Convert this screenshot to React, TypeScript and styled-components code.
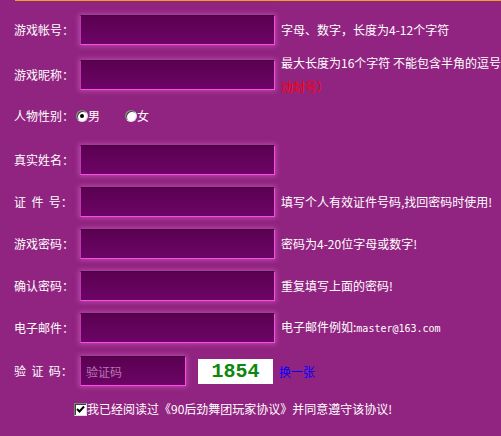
import React from "react";
import styled, { createGlobalStyle } from "styled-components";

const Global = createGlobalStyle`
  html, body { margin: 0; padding: 0; background: #922481; overflow: hidden; }
  body { font-family: "Noto Sans CJK SC", "Liberation Sans", sans-serif; font-size: 12px; color: #fff; }
`;

const Page = styled.div`
  width: 501px;
  height: 436px;
  background: #922481;
  position: relative;
  overflow: hidden;
  display: flex;
  flex-direction: column;
`;

const TopLine = styled.div`
  height: 1px;
  margin-left: 15px;
  background: #f0a020;
  flex: none;
`;

const Row = styled.div<{ $mt: number; $h: number }>`
  display: flex;
  align-items: center;
  margin-top: ${(p) => p.$mt}px;
  height: ${(p) => p.$h}px;
  flex: none;
`;

const Label = styled.div`
  width: 66px;
  padding-left: 14px;
  white-space: pre;
  line-height: 14px;
  flex: none;
`;

const Field = styled.div<{ $w: number }>`
  width: ${(p) => p.$w}px;
  height: 30px;
  box-sizing: border-box;
  flex: none;
  background: linear-gradient(#5a0150, #6d0467);
  border-top: 1px solid #4a0040;
  border-left: 1px solid #c036b0;
  border-right: 1px solid #ff4ae6;
  border-bottom: 1px solid #ff4ae6;
  box-shadow: 0 0 5px 1px rgba(215, 110, 205, 0.55);
  display: flex;
  align-items: center;
  padding-left: 5px;
`;

const Placeholder = styled.span`
  color: #b878ae;
  font-size: 12px;
`;

const Hint = styled.div`
  margin-left: 6px;
  white-space: nowrap;
  line-height: 24px;
`;

const Red = styled.div`
  color: #ff0000;
`;

const Mono = styled.span`
  font-family: "DejaVu Sans Mono", "Liberation Mono", monospace;
  font-size: 10px;
`;

const RadioGroup = styled.div`
  display: flex;
  align-items: center;
  margin-left: -4px;
`;

const RadioItem = styled.label<{ $gap: number }>`
  display: flex;
  align-items: center;
  margin-right: ${(p) => p.$gap}px;
  line-height: 14px;
`;

const RadioDot = styled.span<{ $on: boolean }>`
  width: 12px;
  height: 12px;
  box-sizing: border-box;
  border-radius: 50%;
  background: #fff;
  border: 1px solid #808080;
  border-right-color: #dcdcdc;
  border-bottom-color: #dcdcdc;
  box-shadow: inset 1px 1px 0 #404040;
  display: flex;
  align-items: center;
  justify-content: center;
  &::after {
    content: "";
    width: 4px;
    height: 4px;
    border-radius: 50%;
    background: ${(p) => (p.$on ? "#000" : "transparent")};
  }
`;

const Captcha = styled.div`
  margin-left: 12px;
  width: 75px;
  height: 25px;
  background: #fff;
  display: flex;
  align-items: center;
  justify-content: center;
  font-family: "Liberation Mono", "DejaVu Sans Mono", monospace;
  font-weight: bold;
  font-size: 20px;
  color: #0e870e;
  flex: none;
`;

const Change = styled.a`
  margin-left: 6px;
  color: #0000ff;
  text-decoration: none;
`;

const AgreeRow = styled.div`
  display: flex;
  align-items: center;
  margin-top: 16px;
  margin-left: 74px;
  height: 14px;
  line-height: 14px;
`;

const CheckBox = styled.span`
  width: 13px;
  height: 13px;
  box-sizing: border-box;
  background: #fff;
  border: 1px solid #808080;
  border-right-color: #e0e0e0;
  border-bottom-color: #e0e0e0;
  box-shadow: inset 1px 1px 0 #404040;
  display: flex;
  align-items: center;
  justify-content: center;
  flex: none;
`;

const rows: { label: string; hint?: React.ReactNode; mt: number }[] = [
  { label: "真实姓名：", mt: 22 },
  { label: "证  件  号：", hint: "填写个人有效证件号码,找回密码时使用!", mt: 12 },
  { label: "游戏密码：", hint: "密码为4-20位字母或数字!", mt: 12 },
  { label: "确认密码：", hint: "重复填写上面的密码!", mt: 12 },
  {
    label: "电子邮件：",
    hint: (
      <>
        电子邮件例如:<Mono>master@163.com</Mono>
      </>
    ),
    mt: 12,
  },
];

export default function App() {
  return (
    <Page>
      <Global />
      <TopLine />
      <Row $mt={14} $h={30}>
        <Label>游戏帐号：</Label>
        <Field $w={195} />
        <Hint>字母、数字，长度为4-12个字符</Hint>
      </Row>
      <Row $mt={15} $h={30}>
        <Label>游戏昵称：</Label>
        <Field $w={195} />
        <Hint>
          <div>最大长度为16个字符 不能包含半角的逗号</div>
          <Red>动封号）</Red>
        </Hint>
      </Row>
      <Row $mt={19} $h={14}>
        <Label>人物性别：</Label>
        <RadioGroup>
          <RadioItem $gap={25}>
            <RadioDot $on />男
          </RadioItem>
          <RadioItem $gap={0}>
            <RadioDot $on={false} />女
          </RadioItem>
        </RadioGroup>
      </Row>
      {rows.map((r) => (
        <Row key={r.label} $mt={r.mt} $h={30}>
          <Label>{r.label}</Label>
          <Field $w={195} />
          {r.hint && <Hint>{r.hint}</Hint>}
        </Row>
      ))}
      <Row $mt={13} $h={30}>
        <Label>验  证  码：</Label>
        <Field $w={106}>
          <Placeholder>验证码</Placeholder>
        </Field>
        <Captcha>1854</Captcha>
        <Change href="#">换一张</Change>
      </Row>
      <AgreeRow>
        <CheckBox>
          <svg width="9" height="9" viewBox="0 0 9 9">
            <path d="M1 4 L3.5 6.5 L8 1.5" stroke="#000" strokeWidth="2" fill="none" />
          </svg>
        </CheckBox>
        我已经阅读过《90后劲舞团玩家协议》并同意遵守该协议!
      </AgreeRow>
    </Page>
  );
}
